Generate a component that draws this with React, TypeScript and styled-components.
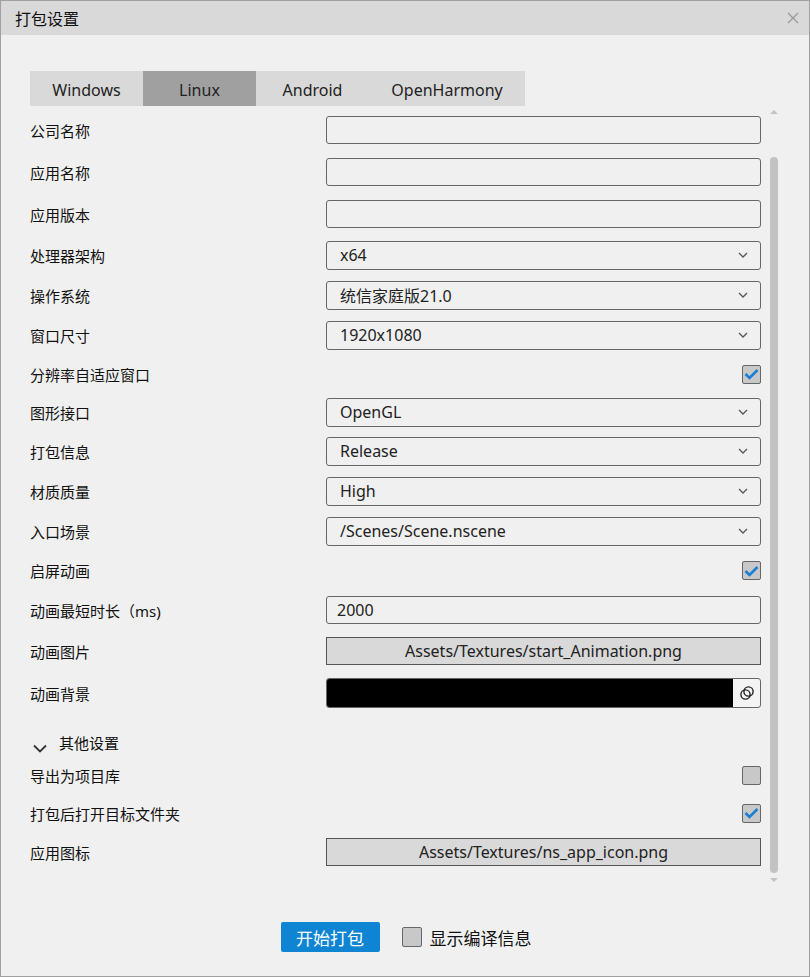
import React from "react";
import styled, { createGlobalStyle } from "styled-components";

const GlobalStyle = createGlobalStyle`
  html, body {
    margin: 0;
    padding: 0;
    background: #f0f0f0;
  }
  * {
    box-sizing: border-box;
  }
`;

const FONT = `"Noto Sans", "Noto Sans CJK SC", sans-serif`;

export const Window = styled.div`
  width: 810px;
  height: 977px;
  border: 1px solid #a0a0a0;
  background: #f0f0f0;
  display: flex;
  flex-direction: column;
  font-family: ${FONT};
  color: #111;
`;

export const TitleBar = styled.header`
  height: 34px;
  flex-shrink: 0;
  background: #d9d9d9;
  display: flex;
  align-items: center;
  justify-content: space-between;
  padding: 0 9px 0 14px;
`;

export const Title = styled.h1`
  margin: 0;
  font-size: 16px;
  font-weight: 400;
  color: #111;
`;

export const Close = styled.button`
  width: 14px;
  height: 14px;
  border: none;
  background: none;
  padding: 0;
  display: flex;
  align-items: center;
  justify-content: center;
  cursor: pointer;
`;

export const Body = styled.div`
  flex: 1;
  display: flex;
  flex-direction: column;
  padding: 36px 0 0 29px;
`;

export const Tabs = styled.nav`
  display: flex;
  height: 35px;
`;

export const Tab = styled.div<{ $active?: boolean; $w: number }>`
  width: ${({ $w }) => $w}px;
  background: ${({ $active }) => ($active ? "#a0a0a0" : "#d9d9d9")};
  display: flex;
  align-items: center;
  justify-content: center;
  padding-top: 2px;
  font-size: 16px;
  color: #222;
`;

export const Scroller = styled.div`
  margin-top: 3px;
  display: flex;
  height: 776px;
`;

export const Form = styled.div`
  width: 731px;
  display: flex;
  flex-direction: column;
`;

export const Row = styled.div<{ $h: number }>`
  height: ${({ $h }) => $h}px;
  display: flex;
  align-items: center;
  justify-content: space-between;
`;

export const Label = styled.span`
  font-size: 15px;
  color: #111;
`;

export const Field = styled.div<{ $h?: number }>`
  width: 435px;
  height: ${({ $h }) => $h ?? 28}px;
  border: 1px solid #666;
  border-radius: 3px;
  background: #f0f0f0;
  display: flex;
  align-items: center;
  padding: 0 10px;
  font-size: 16px;
  color: #222;
`;

export const Select = styled(Field)`
  justify-content: space-between;
  padding: 0 12px 0 13px;
`;

export const FileButton = styled.div`
  width: 435px;
  height: 28px;
  border: 1px solid #555;
  background: #d9d9d9;
  display: flex;
  align-items: center;
  justify-content: center;
  font-size: 16px;
  color: #222;
`;

export const ColorField = styled.div`
  width: 435px;
  height: 30px;
  border: 1px solid #666;
  border-radius: 3px;
  display: flex;
  overflow: hidden;
  background: #f4f4f4;
`;

export const Swatch = styled.div`
  flex: 1;
  background: #000;
`;

export const Picker = styled.div`
  width: 27px;
  display: flex;
  align-items: center;
  justify-content: center;
`;

export const Check = styled.div<{ $size?: number }>`
  width: ${({ $size }) => $size ?? 19}px;
  height: ${({ $size }) => $size ?? 19}px;
  border: 1px solid #666;
  border-radius: 2px;
  background: #c8c8c8;
  display: flex;
  align-items: center;
  justify-content: center;
`;

export const Section = styled.div`
  height: 42px;
  display: flex;
  align-items: flex-end;
  padding: 0 0 3px 3px;
  gap: 12px;
`;

export const SectionTitle = styled.span`
  font-size: 15px;
  color: #111;
`;

export const ScrollTrack = styled.div`
  width: 16px;
  margin-left: 5px;
  display: flex;
  flex-direction: column;
  align-items: center;
`;

export const Arrow = styled.div<{ $down?: boolean }>`
  width: 0;
  height: 0;
  border-left: 4px solid transparent;
  border-right: 4px solid transparent;
  ${({ $down }) =>
    $down ? "border-top: 4px solid #c4c4c4;" : "border-bottom: 4px solid #c4c4c4;"}
  margin-top: ${({ $down }) => ($down ? "5px" : "1px")};
`;

export const Thumb = styled.div`
  width: 8px;
  height: 716px;
  margin-top: 43px;
  border-radius: 4px;
  background: #c2c2c2;
`;

export const Footer = styled.footer`
  flex: 1;
  display: flex;
  align-items: center;
  justify-content: center;
  gap: 22px;
  padding: 13px 0 0 2px;
  margin-left: -29px;
`;

export const StartButton = styled.button`
  width: 99px;
  height: 30px;
  border: none;
  border-radius: 2px;
  background: #0e84d2;
  color: #fff;
  font-family: ${FONT};
  font-size: 17px;
  cursor: pointer;
`;

export const CheckLabel = styled.label`
  display: flex;
  align-items: center;
  gap: 8px;
  font-size: 17px;
  color: #111;
`;

const Chevron = () => (
  <svg width="10" height="6" viewBox="0 0 10 6">
    <path d="M1 1l4 4 4-4" fill="none" stroke="#555" strokeWidth="1.3" />
  </svg>
);

const Tick = () => (
  <svg width="15" height="12" viewBox="0 0 15 12">
    <path d="M1.5 6l4 4 8-8" fill="none" stroke="#1a7fd4" strokeWidth="2.6" />
  </svg>
);

const RingsIcon = () => (
  <svg width="18" height="18" viewBox="0 0 18 18">
    <g fill="none" stroke="#222" strokeWidth="1.4">
      <circle cx="7.5" cy="10.5" r="4.6" />
      <circle cx="10.5" cy="7.5" r="4.6" />
    </g>
  </svg>
);

type Item =
  | { kind: "text"; label: string; value?: string; h: number }
  | { kind: "select"; label: string; value: string; h: number }
  | { kind: "check"; label: string; checked: boolean; h: number }
  | { kind: "file"; label: string; value: string; h: number }
  | { kind: "color"; label: string; h: number };

const main: Item[] = [
  { kind: "text", label: "公司名称", h: 42 },
  { kind: "text", label: "应用名称", h: 42 },
  { kind: "text", label: "应用版本", h: 42 },
  { kind: "select", label: "处理器架构", value: "x64", h: 40 },
  { kind: "select", label: "操作系统", value: "统信家庭版21.0", h: 40 },
  { kind: "select", label: "窗口尺寸", value: "1920x1080", h: 40 },
  { kind: "check", label: "分辨率自适应窗口", checked: true, h: 38 },
  { kind: "select", label: "图形接口", value: "OpenGL", h: 38 },
  { kind: "select", label: "打包信息", value: "Release", h: 40 },
  { kind: "select", label: "材质质量", value: "High", h: 40 },
  { kind: "select", label: "入口场景", value: "/Scenes/Scene.nscene", h: 40 },
  { kind: "check", label: "启屏动画", checked: true, h: 39 },
  { kind: "text", label: "动画最短时长（ms)", value: "2000", h: 40 },
  { kind: "file", label: "动画图片", value: "Assets/Textures/start_Animation.png", h: 42 },
  { kind: "color", label: "动画背景", h: 42 },
];

const other: Item[] = [
  { kind: "check", label: "导出为项目库", checked: false, h: 38 },
  { kind: "check", label: "打包后打开目标文件夹", checked: true, h: 38 },
  { kind: "file", label: "应用图标", value: "Assets/Textures/ns_app_icon.png", h: 40 },
];

const Control = ({ item }: { item: Item }) => {
  switch (item.kind) {
    case "text":
      return <Field>{item.value}</Field>;
    case "select":
      return (
        <Select $h={29}>
          <span>{item.value}</span>
          <Chevron />
        </Select>
      );
    case "check":
      return <Check>{item.checked && <Tick />}</Check>;
    case "file":
      return <FileButton>{item.value}</FileButton>;
    case "color":
      return (
        <ColorField>
          <Swatch />
          <Picker>
            <RingsIcon />
          </Picker>
        </ColorField>
      );
  }
};

const FormRow = ({ item }: { item: Item }) => (
  <Row $h={item.h}>
    <Label>{item.label}</Label>
    <Control item={item} />
  </Row>
);

const tabs = [
  { name: "Windows", w: 113 },
  { name: "Linux", w: 113, active: true },
  { name: "Android", w: 113 },
  { name: "OpenHarmony", w: 156 },
];

const App = () => {
  return (
    <>
      <GlobalStyle />
      <Window>
        <TitleBar>
          <Title>打包设置</Title>
          <Close>
            <svg width="12" height="12" viewBox="0 0 12 12">
              <path d="M1 1l10 10M11 1L1 11" stroke="#999" strokeWidth="1.3" />
            </svg>
          </Close>
        </TitleBar>
        <Body>
          <Tabs>
            {tabs.map((t) => (
              <Tab key={t.name} $w={t.w} $active={t.active}>
                {t.name}
              </Tab>
            ))}
          </Tabs>
          <Scroller>
            <Form>
              {main.map((item) => (
                <FormRow key={item.label} item={item} />
              ))}
              <Section>
                <svg width="14" height="9" viewBox="0 0 14 9">
                  <path d="M1 1.5l6 6 6-6" fill="none" stroke="#333" strokeWidth="1.8" />
                </svg>
                <SectionTitle>其他设置</SectionTitle>
              </Section>
              {other.map((item) => (
                <FormRow key={item.label} item={item} />
              ))}
            </Form>
            <ScrollTrack>
              <Arrow />
              <Thumb />
              <Arrow $down />
            </ScrollTrack>
          </Scroller>
          <Footer>
            <StartButton>开始打包</StartButton>
            <CheckLabel>
              <Check $size={20} />
              显示编译信息
            </CheckLabel>
          </Footer>
        </Body>
      </Window>
    </>
  );
};

export default App;
